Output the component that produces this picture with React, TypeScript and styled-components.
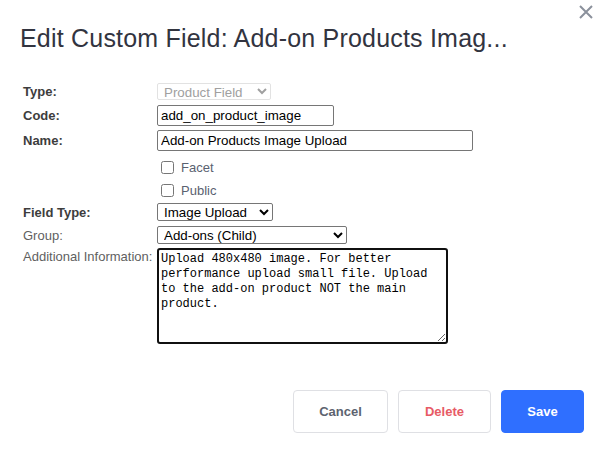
import React from "react";
import styled, { createGlobalStyle } from "styled-components";

const Global = createGlobalStyle`
  html, body { margin: 0; padding: 0; background: #ffffff; }
  body { font-family: "Liberation Sans", Arial, sans-serif; }
  * { box-sizing: border-box; }
`;

const Dialog = styled.div`
  width: 604px;
  height: 451px;
  background: #fff;
  display: flex;
  flex-direction: column;
`;

const Header = styled.div`
  display: flex;
  justify-content: space-between;
  align-items: flex-start;
  padding: 0 11px 0 20px;
`;

const Title = styled.h1`
  margin: 24px 0 0 0;
  font-family: "Liberation Sans", Arial, sans-serif;
  font-weight: 400;
  font-size: 25px;
  letter-spacing: 0.2px;
  line-height: normal;
  color: #32343f;
`;

const CloseButton = styled.button`
  margin-top: 5px;
  width: 14px;
  height: 14px;
  padding: 0;
  border: none;
  background: transparent;
  display: flex;
  cursor: pointer;
`;

const Form = styled.div`
  display: flex;
  flex-direction: column;
  padding: 0 0 0 23px;
  margin-top: 30px;
`;

const Row = styled.div<{ $h: number; $mt: number; $top?: boolean }>`
  display: flex;
  align-items: ${(p) => (p.$top ? "flex-start" : "center")};
  height: ${(p) => p.$h}px;
  margin-top: ${(p) => p.$mt}px;
`;

const Label = styled.label<{ $bold?: boolean; $pt?: number }>`
  width: 134px;
  flex: none;
  font-family: "Liberation Sans", Arial, sans-serif;
  font-size: 13px;
  font-weight: ${(p) => (p.$bold ? 700 : 400)};
  color: ${(p) => (p.$bold ? "#3d3d3d" : "#5f5f5f")};
  padding-top: ${(p) => p.$pt ?? 0}px;
`;

const Select = styled.select<{ $w: number; $h: number }>`
  width: ${(p) => p.$w}px;
  height: ${(p) => p.$h}px;
  font-family: "Liberation Sans", Arial, sans-serif;
  font-size: 13.33px;
  color: #000;
  border: 1px solid #767676;
  border-radius: 2px;
  background: #fff;
  padding: 0 0 0 2px;
  &:disabled {
    color: #a0a0a0;
    border-color: #e2e2e2;
    background: #fff;
    opacity: 1;
  }
`;

const TextInput = styled.input<{ $w: number }>`
  width: ${(p) => p.$w}px;
  height: 21px;
  font-family: "Liberation Sans", Arial, sans-serif;
  font-size: 13.33px;
  color: #000;
  border: 1px solid #767676;
  border-radius: 2px;
  padding: 1px 3px;
  outline: none;
`;

const CheckLabel = styled.label`
  display: flex;
  align-items: center;
  font-family: "Liberation Sans", Arial, sans-serif;
  font-size: 13px;
  color: #5a6170;
  input {
    margin: 0 7px 0 4px;
    width: 13px;
    height: 13px;
  }
`;

const Spacer = styled.div`
  width: 134px;
  flex: none;
`;

const TextArea = styled.textarea`
  width: 291px;
  height: 96px;
  border: 2px solid #101010;
  border-radius: 3px;
  padding: 2px;
  font-family: "Liberation Mono", "Courier New", monospace;
  font-size: 12px;
  line-height: 15px;
  color: #000;
  outline: none;
  resize: both;
`;

const Footer = styled.div`
  display: flex;
  justify-content: flex-end;
  gap: 10px;
  padding-right: 20px;
  margin-top: 46px;
`;

const Button = styled.button<{ $variant: "cancel" | "delete" | "save"; $w: number }>`
  width: ${(p) => p.$w}px;
  height: 43px;
  border-radius: 4px;
  font-family: "Liberation Sans", Arial, sans-serif;
  font-size: 13px;
  font-weight: 700;
  cursor: pointer;
  border: 1px solid
    ${(p) => (p.$variant === "save" ? "#2f6fff" : "#dfe0e4")};
  background: ${(p) => (p.$variant === "save" ? "#2f6fff" : "#ffffff")};
  color: ${(p) =>
    p.$variant === "save" ? "#ffffff" : p.$variant === "delete" ? "#e75b66" : "#5d636f"};
`;

export default function App() {
  return (
    <Dialog>
      <Global />
      <Header>
        <Title>Edit Custom Field: Add-on Products Imag...</Title>
        <CloseButton aria-label="Close">
          <svg width="14" height="14" viewBox="0 0 14 14">
            <path d="M1 1 L13 13 M13 1 L1 13" stroke="#8b919c" strokeWidth="2" strokeLinecap="butt" />
          </svg>
        </CloseButton>
      </Header>
      <Form>
        <Row $h={17} $mt={0}>
          <Label $bold>Type:</Label>
          <Select $w={114} $h={17} disabled defaultValue="pf">
            <option value="pf">Product Field</option>
          </Select>
        </Row>
        <Row $h={21} $mt={5}>
          <Label $bold>Code:</Label>
          <TextInput $w={177} defaultValue="add_on_product_image" />
        </Row>
        <Row $h={21} $mt={4}>
          <Label $bold>Name:</Label>
          <TextInput $w={316} defaultValue="Add-on Products Image Upload" />
        </Row>
        <Row $h={22} $mt={5}>
          <Spacer />
          <CheckLabel>
            <input type="checkbox" />
            Facet
          </CheckLabel>
        </Row>
        <Row $h={22} $mt={1}>
          <Spacer />
          <CheckLabel>
            <input type="checkbox" />
            Public
          </CheckLabel>
        </Row>
        <Row $h={18} $mt={2}>
          <Label $bold>Field Type:</Label>
          <Select $w={116} $h={18} defaultValue="iu">
            <option value="iu">Image Upload</option>
          </Select>
        </Row>
        <Row $h={18} $mt={5}>
          <Label>Group:</Label>
          <Select $w={190} $h={18} defaultValue="ao">
            <option value="ao">Add-ons (Child)</option>
          </Select>
        </Row>
        <Row $h={96} $mt={4} $top>
          <Label $pt={1}>Additional Information:</Label>
          <TextArea defaultValue="Upload 480x480 image. For better performance upload small file. Upload to the add-on product NOT the main product." />
        </Row>
      </Form>
      <Footer>
        <Button $variant="cancel" $w={95}>Cancel</Button>
        <Button $variant="delete" $w={93}>Delete</Button>
        <Button $variant="save" $w={83}>Save</Button>
      </Footer>
    </Dialog>
  );
}
